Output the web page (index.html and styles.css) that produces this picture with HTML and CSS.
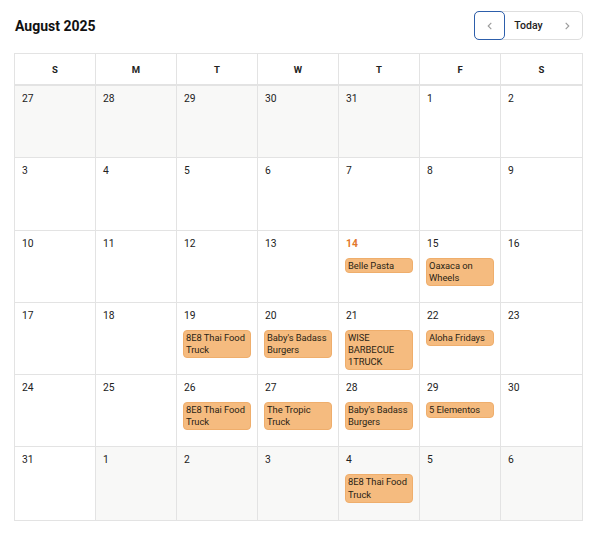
FILE: index.html
```html
<!DOCTYPE html>
<html>
<head>
<meta charset="utf-8">
<link rel="stylesheet" href="styles.css">
</head>
<body>
<div class="cal">
  <div class="top">
    <h1 class="title">August 2025</h1>
    <div class="nav">
      <button class="btn prev" aria-label="Previous"><svg width="10" height="10" viewBox="0 0 10 10"><path d="M6.3 1.8 L3.2 5 L6.3 8.2" fill="none" stroke="#9a9a9a" stroke-width="1.1"/></svg></button>
      <button class="btn today">Today</button>
      <button class="btn next" aria-label="Next"><svg width="10" height="10" viewBox="0 0 10 10"><path d="M3.7 1.8 L6.8 5 L3.7 8.2" fill="none" stroke="#9a9a9a" stroke-width="1.1"/></svg></button>
    </div>
  </div>
  <div class="grid">
    <div class="dow">S</div><div class="dow">M</div><div class="dow">T</div><div class="dow">W</div><div class="dow">T</div><div class="dow">F</div><div class="dow last">S</div>

    <div class="cell out"><span class="num">27</span></div>
    <div class="cell out"><span class="num">28</span></div>
    <div class="cell out"><span class="num">29</span></div>
    <div class="cell out"><span class="num">30</span></div>
    <div class="cell out"><span class="num">31</span></div>
    <div class="cell"><span class="num">1</span></div>
    <div class="cell last"><span class="num">2</span></div>

    <div class="cell"><span class="num">3</span></div>
    <div class="cell"><span class="num">4</span></div>
    <div class="cell"><span class="num">5</span></div>
    <div class="cell"><span class="num">6</span></div>
    <div class="cell"><span class="num">7</span></div>
    <div class="cell"><span class="num">8</span></div>
    <div class="cell last"><span class="num">9</span></div>

    <div class="cell"><span class="num">10</span></div>
    <div class="cell"><span class="num">11</span></div>
    <div class="cell"><span class="num">12</span></div>
    <div class="cell"><span class="num">13</span></div>
    <div class="cell"><span class="num today-num">14</span><div class="ev">Belle Pasta</div></div>
    <div class="cell"><span class="num">15</span><div class="ev">Oaxaca on Wheels</div></div>
    <div class="cell last"><span class="num">16</span></div>

    <div class="cell"><span class="num">17</span></div>
    <div class="cell"><span class="num">18</span></div>
    <div class="cell"><span class="num">19</span><div class="ev">8E8 Thai Food Truck</div></div>
    <div class="cell"><span class="num">20</span><div class="ev">Baby's Badass Burgers</div></div>
    <div class="cell"><span class="num">21</span><div class="ev">WISE BARBECUE 1TRUCK</div></div>
    <div class="cell"><span class="num">22</span><div class="ev">Aloha Fridays</div></div>
    <div class="cell last"><span class="num">23</span></div>

    <div class="cell"><span class="num">24</span></div>
    <div class="cell"><span class="num">25</span></div>
    <div class="cell"><span class="num">26</span><div class="ev">8E8 Thai Food Truck</div></div>
    <div class="cell"><span class="num">27</span><div class="ev">The Tropic Truck</div></div>
    <div class="cell"><span class="num">28</span><div class="ev">Baby's Badass Burgers</div></div>
    <div class="cell"><span class="num">29</span><div class="ev">5 Elementos</div></div>
    <div class="cell last"><span class="num">30</span></div>

    <div class="cell"><span class="num">31</span></div>
    <div class="cell out"><span class="num">1</span></div>
    <div class="cell out"><span class="num">2</span></div>
    <div class="cell out"><span class="num">3</span></div>
    <div class="cell out"><span class="num">4</span><div class="ev">8E8 Thai Food Truck</div></div>
    <div class="cell out"><span class="num">5</span></div>
    <div class="cell out last"><span class="num">6</span></div>
  </div>
</div>
</body>
</html>
```

FILE: styles.css
```css
* { box-sizing: border-box; }
html, body { margin: 0; padding: 0; background: #fff; }
body { font-family: Roboto, "Liberation Sans", sans-serif; color: #222; }
.cal { padding: 11px 17px 0 14px; }
.top { display: flex; align-items: center; justify-content: space-between; height: 29px; margin-bottom: 13px; }
.title { margin: 0; font-size: 14px; font-weight: 700; color: #111; padding-left: 1px; }
.nav { display: flex; height: 29px; border: 1px solid #dedede; border-radius: 5px; background: #fff; }
.btn { border: none; background: transparent; font-family: inherit; padding: 0; display: flex; align-items: center; justify-content: center; cursor: pointer; }
.prev { width: 31px; margin: -1px 0 -1px -1px; border: 1.5px solid #2d5eab; border-radius: 5px; }
.today { width: 47px; font-size: 10.5px; font-weight: 500; color: #222; }
.next { width: 30px; }
.grid { display: grid; grid-template-columns: repeat(7, 1fr); grid-template-rows: 32px repeat(6, 72.3px); border: 1px solid #e3e3e3; width: 569px; }
.dow { display: flex; align-items: center; justify-content: center; font-size: 9.5px; font-weight: 700; color: #222; border-right: 1px solid #e3e3e3; border-bottom: 2px solid #e3e3e3; }
.cell { border-right: 1px solid #e3e3e3; border-bottom: 1px solid #e3e3e3; padding: 6px 6px 0 6px; display: flex; flex-direction: column; align-items: stretch; }
.last { border-right: none; }
.cell:nth-last-child(-n+7) { border-bottom: none; }
.out { background: #f8f8f7; }
.num { font-size: 10.3px; line-height: 13px; height: 13px; color: #222; padding-left: 1px; }
.today-num { color: #e2772c; font-weight: 700; }
.ev { margin-top: 8px; background: #f5bb7f; border: 1px solid #efae6c; border-radius: 4px; font-size: 9.4px; letter-spacing: -0.05px; line-height: 12.3px; padding: 1px 1px 0.5px 2px; color: #2a1f15; }
```
